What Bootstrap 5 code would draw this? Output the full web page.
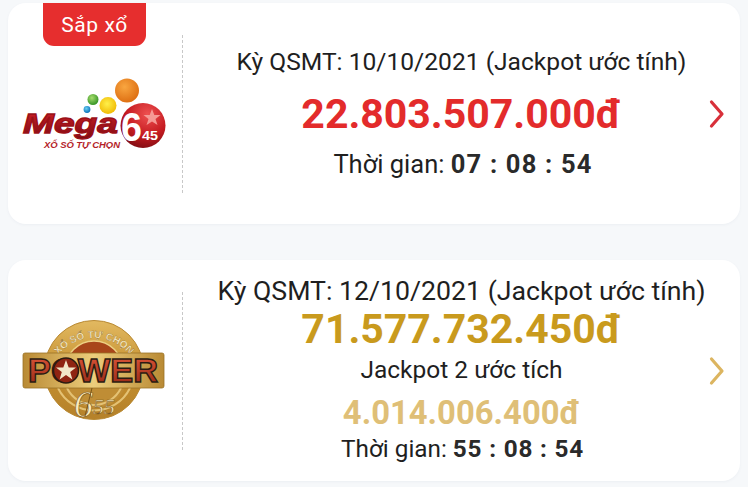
<!DOCTYPE html>
<html lang="vi"><head><meta charset="utf-8"><title>Lottery</title>
<link rel="stylesheet" href="https://cdn.jsdelivr.net/npm/bootstrap@5.3.0/dist/css/bootstrap.min.css">
<style>
html,body{height:487px;overflow:hidden}
body{background:#f6f8fa;font-family:Roboto,"Liberation Sans",sans-serif;color:#1f1f1f;padding:3px 8px 0}
.game-card{height:221px;background:#fff;border-radius:18px;box-shadow:0 1px 3px rgba(60,80,110,.05);position:relative}
.c1{margin-bottom:36px}
.logo-col{width:174px;flex:none}
.logo-col svg{display:block;margin-left:14px}
.divider{width:0;height:158px;border-left:1px dashed #c8c8c8;flex:none}
.info{flex:1;text-align:center;line-height:1}
.draw{white-space:nowrap}
.c1 .draw{font-size:24.600px;line-height:28px;margin-bottom:13px}
.c2 .draw{font-size:26.700px;line-height:32px}
.amount{font-weight:700;font-size:41px;line-height:50px;white-space:nowrap}
.c1 .amount{margin-bottom:10px}
.c2 .amount{line-height:44px}
.red{color:#e32b2b}.gold{color:#c99a1d}.pale{color:#dfbf77}
.c2 .second{font-size:32.800px;line-height:48px}
.sub{font-size:24.500px;line-height:38px}
.c1 .timer{font-size:25.500px;line-height:30px;padding-left:3px}
.c2 .timer{font-size:24.300px;line-height:24px;padding:0 0 5px 2px}
.timer b{font-weight:700;color:#2a2a2a}
.c1 .timer b{letter-spacing:1.200px}
.c2 .timer b{letter-spacing:.800px}
.tag{position:absolute;left:35px;top:0;width:103px;height:43px;background:#e62e2e;color:#fff;border-radius:0 0 11px 11px;font-size:21px;letter-spacing:.6px;line-height:44px;text-align:center}
.chev{position:absolute;left:700px;top:96px}
</style></head><body>
<div class="game-card c1 d-flex align-items-center">
  <div class="tag">Sắp xổ</div>
  <div class="logo-col">
    <svg width="146" height="76" viewBox="0 0 146 76">
      <defs>
        <radialGradient id="o" cx=".4" cy=".35" r=".7"><stop offset="0" stop-color="#f9a640"/><stop offset="1" stop-color="#dc6c10"/></radialGradient>
        <radialGradient id="y" cx=".45" cy=".4" r=".6"><stop offset="0" stop-color="#fff04a"/><stop offset="1" stop-color="#f1bb05"/></radialGradient>
        <radialGradient id="g" cx=".4" cy=".35" r=".6"><stop offset="0" stop-color="#a6dd6d"/><stop offset="1" stop-color="#3f9a2b"/></radialGradient>
        <radialGradient id="b" cx=".4" cy=".35" r=".6"><stop offset="0" stop-color="#6bd0f2"/><stop offset="1" stop-color="#1179c0"/></radialGradient>
        <radialGradient id="r" cx=".6" cy=".25" r=".8"><stop offset="0" stop-color="#ee5050"/><stop offset=".6" stop-color="#c41a20"/><stop offset="1" stop-color="#7d0c12"/></radialGradient>
        <linearGradient id="m" x1="0" y1="0" x2="0" y2="1"><stop offset="0" stop-color="#d42028"/><stop offset="1" stop-color="#7c0b12"/></linearGradient>
      </defs>
      <circle cx="105" cy="14.500" r="12" fill="url(#o)"/>
      <circle cx="86" cy="29.500" r="8.500" fill="url(#y)"/>
      <circle cx="71" cy="23.500" r="5.500" fill="url(#g)"/>
      <circle cx="65" cy="33.500" r="3.400" fill="url(#b)"/>
      <circle cx="121" cy="49.500" r="22.500" fill="url(#r)"/>
      <polygon points="130,33 132.300,39 138.500,39 133.500,43 135.500,49 130,45.500 124.500,49 126.500,43 121.500,39 127.700,39" fill="#f59a95"/>
      <text x="1" y="57" font-family="Liberation Sans,sans-serif" font-size="28" font-weight="700" font-style="italic" fill="url(#m)" stroke="#9b1118" stroke-width="1.300" textLength="95" lengthAdjust="spacingAndGlyphs">Mega</text>
      <text x="99" y="65" font-family="Liberation Sans,sans-serif" font-size="40" font-weight="700" fill="#fff" textLength="21" lengthAdjust="spacingAndGlyphs">6</text>
      <text x="120" y="63.500" font-family="Liberation Sans,sans-serif" font-size="13" font-weight="700" fill="#fff" textLength="16" lengthAdjust="spacingAndGlyphs">45</text>
      <text x="22" y="72" font-family="Liberation Sans,sans-serif" font-size="9.500" font-weight="700" font-style="italic" fill="#b51f2a" textLength="76" lengthAdjust="spacing">XỔ SỐ TỰ CHỌN</text>
    </svg>
  </div>
  <div class="divider"></div>
  <div class="info">
    <div class="draw">Kỳ QSMT: 10/10/2021 (Jackpot ước tính)</div>
    <div class="amount red">22.803.507.000đ</div>
    <div class="timer">Thời gian: <b>07 : 08 : 54</b></div>
  </div>
  <svg class="chev" width="18" height="30" viewBox="0 0 18 30"><path d="M3.500 3 14 15 3.500 27" fill="none" stroke="#d8303a" stroke-width="3.200" stroke-linecap="round" stroke-linejoin="round"/></svg>
</div>
<div class="game-card c2 d-flex align-items-center">
  <div class="logo-col">
    <svg width="146" height="114" viewBox="0 -6 146 114">
      <defs>
        <linearGradient id="gd" x1="0" y1="0" x2="0" y2="1"><stop offset="0" stop-color="#e2b961"/><stop offset=".5" stop-color="#c5902f"/><stop offset="1" stop-color="#b5812a"/></linearGradient>
        <linearGradient id="bar" x1="0" y1="0" x2="1" y2="0"><stop offset="0" stop-color="#b98a34"/><stop offset=".5" stop-color="#eccd7c"/><stop offset="1" stop-color="#b98a34"/></linearGradient>
        <linearGradient id="wr" x1="0" y1="0" x2="0" y2="1"><stop offset="0" stop-color="#e25a3c"/><stop offset="1" stop-color="#8f2412"/></linearGradient>
      </defs>
      <circle cx="72" cy="50" r="49.500" fill="url(#gd)" stroke="#b98a34"/>
      <circle cx="72" cy="50" r="29" fill="#a8461a" stroke="#ecd084" stroke-width="1.500"/>
      <path d="M41 68a34 34 0 0 0 62 0" fill="#bf8d35"/>
      <path d="M36 68a40 40 0 0 0 72 0" fill="none" stroke="#e4c274" stroke-width="2"/>
      <path d="M45 68a30 30 0 0 0 54 0" fill="none" stroke="#e4c274" stroke-width="2"/>
      <path id="arc1" d="M38 33A46 46 0 0 1 106 33" fill="none"/>
      <text font-family="Liberation Sans,sans-serif" font-size="10" font-weight="700" fill="#fbeec6" stroke="#7a5518" stroke-width=".25" text-anchor="middle"><textPath href="#arc1" startOffset="50%">XỔ SỐ TỰ CHỌN</textPath></text>
      <rect x="1" y="33" width="141" height="35" rx="2" fill="url(#bar)" stroke="#9a7226" stroke-width=".8"/>
      <text x="71" y="62" text-anchor="middle" font-family="Liberation Sans,sans-serif" font-size="33" font-weight="700" fill="url(#wr)" stroke="#2c1c12" stroke-width="1.400" textLength="130" lengthAdjust="spacingAndGlyphs">POWER</text>
      <circle cx="44" cy="50.500" r="12.500" fill="#8f2412" stroke="#2c1c12" stroke-width="1.500"/>
      <polygon points="44,40 46.700,47.500 54,47.500 48.200,52 50.400,59.500 44,55 37.600,59.500 39.800,52 34,47.500 41.300,47.500" fill="#f2e6c8"/>
      <text x="52" y="97" font-family="Liberation Serif,serif" font-size="38" font-style="italic" fill="#f9eabd" stroke="#7a5518" stroke-width=".6">6</text>
      <path d="M70 68 63 96" stroke="#7a5518" stroke-width="1"/>
      <text x="71" y="94" font-family="Liberation Serif,serif" font-size="22" font-style="italic" fill="#f9eabd" stroke="#7a5518" stroke-width=".5">55</text>
    </svg>
  </div>
  <div class="divider"></div>
  <div class="info">
    <div class="draw">Kỳ QSMT: 12/10/2021 (Jackpot ước tính)</div>
    <div class="amount gold">71.577.732.450đ</div>
    <div class="sub">Jackpot 2 ước tích</div>
    <div class="amount pale second">4.014.006.400đ</div>
    <div class="timer">Thời gian: <b>55 : 08 : 54</b></div>
  </div>
  <svg class="chev" width="18" height="30" viewBox="0 0 18 30"><path d="M3.500 3 14 15 3.500 27" fill="none" stroke="#dcb560" stroke-width="3.200" stroke-linecap="round" stroke-linejoin="round"/></svg>
</div>
</body></html>
